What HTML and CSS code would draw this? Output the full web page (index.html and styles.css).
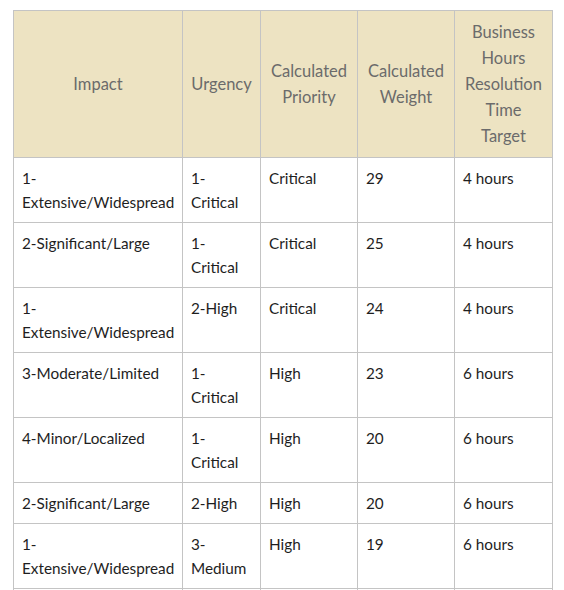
FILE: index.html
```html
<!DOCTYPE html>
<html>
<head>
<meta charset="utf-8">
<link rel="stylesheet" href="styles.css">
</head>
<body>
<table class="prio">
  <colgroup>
    <col class="c1"><col class="c2"><col class="c3"><col class="c4"><col class="c5">
  </colgroup>
  <thead>
    <tr>
      <th>Impact</th>
      <th>Urgency</th>
      <th>Calculated Priority</th>
      <th>Calculated Weight</th>
      <th>Business Hours Resolution Time Target</th>
    </tr>
  </thead>
  <tbody>
    <tr><td>1-Extensive/Widespread</td><td>1-Critical</td><td>Critical</td><td>29</td><td>4 hours</td></tr>
    <tr><td>2-Significant/Large</td><td>1-Critical</td><td>Critical</td><td>25</td><td>4 hours</td></tr>
    <tr><td>1-Extensive/Widespread</td><td>2-High</td><td>Critical</td><td>24</td><td>4 hours</td></tr>
    <tr><td>3-Moderate/Limited</td><td>1-Critical</td><td>High</td><td>23</td><td>6 hours</td></tr>
    <tr><td>4-Minor/Localized</td><td>1-Critical</td><td>High</td><td>20</td><td>6 hours</td></tr>
    <tr><td>2-Significant/Large</td><td>2-High</td><td>High</td><td>20</td><td>6 hours</td></tr>
    <tr><td>1-Extensive/Widespread</td><td>3-Medium</td><td>High</td><td>19</td><td>6 hours</td></tr>
    <tr class="cont"><td></td><td></td><td></td><td></td><td></td></tr>
  </tbody>
</table>
</body>
</html>
```
FILE: styles.css
```css
html, body {
  margin: 0;
  padding: 0;
  background: #ffffff;
}
body {
  padding: 10px 0 0 13px;
  font-family: "Lato", "Liberation Sans", sans-serif;
}
.prio {
  border-collapse: collapse;
  table-layout: fixed;
  width: 539px;
}
.c1 { width: 169px; }
.c2 { width: 78px; }
.c3 { width: 97px; }
.c4 { width: 97px; }
.c5 { width: 98px; }
.prio th,
.prio td {
  border: 1px solid #c4c4c4;
  padding: 8px 8px;
}
.prio th {
  background: #ede3c2;
  color: #6b6b6b;
  font-weight: 400;
  font-size: 16.5px;
  line-height: 26px;
  text-align: center;
  vertical-align: middle;
}
.prio td {
  color: #1e1e1e;
  font-size: 15.3px;
  line-height: 24px;
  text-align: left;
  vertical-align: top;
}
.prio .cont td {
  height: 24px;
}
```
